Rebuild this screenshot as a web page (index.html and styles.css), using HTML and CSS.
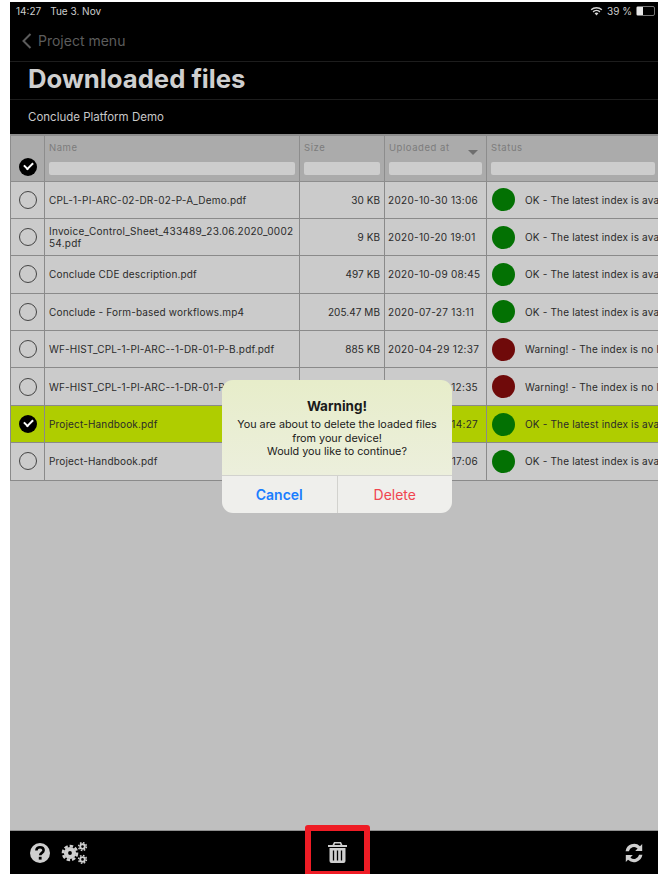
FILE: index.html
```html
<!DOCTYPE html>
<html lang="en">
<head>
  <meta charset="UTF-8">
  <title>Downloaded files</title>
  <link rel="stylesheet" href="styles.css">
</head>
<body>
<div class="screen">
  <div class="statusbar">
    <span class="time">14:27</span>
    <span class="date">Tue 3. Nov</span>
    <span class="status-right">
      <svg class="wifi" viewBox="0 0 16 12"><path d="M8 11.5 5.6 8.9a3.4 3.4 0 0 1 4.8 0zM4.4 7.7 3.2 6.4a6.9 6.9 0 0 1 9.6 0l-1.2 1.3a5.2 5.2 0 0 0-7.2 0zM2 5.2.8 3.9a10.4 10.4 0 0 1 14.4 0L14 5.2a8.7 8.7 0 0 0-12 0z"/></svg>
      <span class="battery-text">39 %</span>
      <span class="battery"><span class="battery-fill"></span></span>
    </span>
  </div>
  <div class="navbar">
    <svg class="back" viewBox="0 0 12 18"><path d="M10 2 3 9l7 7"/></svg>
    <span>Project menu</span>
  </div>
  <h1 class="title">Downloaded files</h1>
  <div class="subtitle">Conclude Platform Demo</div>

  <div class="content">
    <table class="files">
      <thead>
        <tr>
          <th class="col-check"><span class="tick"></span></th>
          <th class="col-name"><div class="th-label">Name</div><div class="filter"></div></th>
          <th class="col-size"><div class="th-label">Size</div><div class="filter"></div></th>
          <th class="col-date"><div class="th-label">Uploaded at<span class="sort"></span></div><div class="filter"></div></th>
          <th class="col-status"><div class="th-label">Status</div><div class="filter"></div></th>
        </tr>
      </thead>
      <tbody>
        <tr>
          <td class="col-check"><span class="radio"></span></td>
          <td>CPL-1-PI-ARC-02-DR-02-P-A_Demo.pdf</td>
          <td class="size">30 KB</td>
          <td class="when">2020-10-30 13:06</td>
          <td><div class="status"><span class="dot ok"></span><span>OK - The latest index is available</span></div></td>
        </tr>
        <tr>
          <td class="col-check"><span class="radio"></span></td>
          <td class="wrap">Invoice_Control_Sheet_433489_23.06.2020_0002<br>54.pdf</td>
          <td class="size">9 KB</td>
          <td class="when">2020-10-20 19:01</td>
          <td><div class="status"><span class="dot ok"></span><span>OK - The latest index is available</span></div></td>
        </tr>
        <tr>
          <td class="col-check"><span class="radio"></span></td>
          <td>Conclude CDE description.pdf</td>
          <td class="size">497 KB</td>
          <td class="when">2020-10-09 08:45</td>
          <td><div class="status"><span class="dot ok"></span><span>OK - The latest index is available</span></div></td>
        </tr>
        <tr>
          <td class="col-check"><span class="radio"></span></td>
          <td>Conclude - Form-based workflows.mp4</td>
          <td class="size">205.47 MB</td>
          <td class="when">2020-07-27 13:11</td>
          <td><div class="status"><span class="dot ok"></span><span>OK - The latest index is available</span></div></td>
        </tr>
        <tr>
          <td class="col-check"><span class="radio"></span></td>
          <td>WF-HIST_CPL-1-PI-ARC--1-DR-01-P-B.pdf.pdf</td>
          <td class="size">885 KB</td>
          <td class="when">2020-04-29 12:37</td>
          <td><div class="status"><span class="dot warn"></span><span>Warning! - The index is no longer valid</span></div></td>
        </tr>
        <tr>
          <td class="col-check"><span class="radio"></span></td>
          <td class="name-cut">WF-HIST_CPL-1-PI-ARC--1-DR-01-P</td>
          <td class="size"></td>
          <td class="when end">12:35</td>
          <td><div class="status"><span class="dot warn"></span><span>Warning! - The index is no longer valid</span></div></td>
        </tr>
        <tr class="selected">
          <td class="col-check"><span class="tick"></span></td>
          <td>Project-Handbook.pdf</td>
          <td class="size"></td>
          <td class="when end">14:27</td>
          <td><div class="status"><span class="dot ok"></span><span>OK - The latest index is available</span></div></td>
        </tr>
        <tr>
          <td class="col-check"><span class="radio"></span></td>
          <td>Project-Handbook.pdf</td>
          <td class="size"></td>
          <td class="when end">17:06</td>
          <td><div class="status"><span class="dot ok"></span><span>OK - The latest index is available</span></div></td>
        </tr>
      </tbody>
    </table>
  </div>

  <div class="toolbar">
    <div class="toolbar-left">
      <svg class="icon" width="22" height="22" viewBox="0 0 22 22">
        <circle cx="11" cy="11" r="10" fill="#cfcfcf"/>
        <path d="M7.4 8.6c0-2.2 1.6-3.4 3.6-3.4s3.6 1.2 3.6 3.1c0 2.6-3.4 2.600-3.400 5" fill="none" stroke="#000" stroke-width="2.600"/>
        <rect x="9.800" y="14.800" width="2.800" height="2.800" fill="#000"/>
      </svg>
      <svg class="icon" width="27" height="22" viewBox="0 0 27 22">
        <g fill="none" stroke="#cfcfcf">
          <circle cx="9" cy="11" r="4" stroke-width="4.200"/>
          <circle cx="9" cy="11" r="7" stroke-width="2.600" stroke-dasharray="3.500 1.900"/>
          <circle cx="21.500" cy="4.600" r="2.300" stroke-width="1.900"/>
          <circle cx="21.500" cy="4.600" r="3.900" stroke-width="1.500" stroke-dasharray="1.600 1.460"/>
          <circle cx="21.500" cy="17.400" r="2.300" stroke-width="1.900"/>
          <circle cx="21.500" cy="17.400" r="3.900" stroke-width="1.500" stroke-dasharray="1.600 1.460"/>
        </g>
      </svg>
    </div>
    <svg class="icon trash" width="19" height="21" viewBox="0 0 19 21">
      <path fill="#cfcfcf" d="M6 0h7l1.500 3H19v2H0V3h4.500zM7 1.500 6.400 3h6.200L12 1.500zM1.500 6h16v13a2 2 0 0 1-2 2h-12a2 2 0 0 1-2-2z"/>
      <path stroke="#000" stroke-width="1.300" d="M5.500 8.500v10M9.500 8.500v10M13.500 8.500v10"/>
    </svg>
    <svg class="icon" width="22" height="22" viewBox="0 0 22 22">
      <g fill="#cfcfcf">
        <path d="M2.600 9.200A8.600 8.600 0 0 1 17 4.200L19.200 2v7h-7l2.400-2.400a5.200 5.200 0 0 0-8.700 2.600z"/>
        <path d="M19.400 12.800A8.600 8.600 0 0 1 5 17.800L2.800 20v-7h7l-2.400 2.400a5.200 5.200 0 0 0 8.700-2.600z"/>
      </g>
    </svg>
  </div>

  <div class="dialog">
    <div class="dialog-body">
      <div class="dialog-title">Warning!</div>
      <div class="dialog-text">You are about to delete the loaded files<br>from your device!<br>Would you like to continue?</div>
    </div>
    <div class="dialog-actions">
      <div class="dialog-btn cancel">Cancel</div>
      <div class="dialog-btn delete">Delete</div>
    </div>
  </div>

  <div class="callout"></div>
</div>
</body>
</html>
```

FILE: styles.css
```css
html, body { margin: 0; padding: 0; background: #fff; }
body { font-family: Inter, 'Liberation Sans', Arial, sans-serif; }
.screen {
  position: relative;
  width: 648px;
  height: 872px;
  margin: 2px 0 0 10px;
  background: #000;
  display: flex;
  flex-direction: column;
  overflow: hidden;
}

.statusbar {
  height: 18px;
  display: flex;
  align-items: center;
  padding: 0 3px 0 6px;
  color: #cdcdcd;
  font-size: 10px;
}
.date { margin-left: 9px; }
.status-right {
  margin-left: auto;
  display: flex;
  align-items: center;
  gap: 4px;
}
.wifi { width: 13px; height: 10px; fill: #d6d6d6; }
.battery {
  width: 17px;
  height: 8px;
  border: 1px solid #777;
  border-radius: 2px;
  display: block;
}
.battery-fill { display: block; width: 6px; height: 8px; background: #e8e8e8; }

.navbar {
  height: 42px;
  display: flex;
  align-items: center;
  gap: 5px;
  padding-left: 10px;
  color: #5c5c5c;
  font-size: 14px;
  border-bottom: 1px solid #1d1d1d;
  box-sizing: border-box;
}
.back { width: 13px; height: 18px; fill: none; stroke: #5c5c5c; stroke-width: 2; }

.title {
  margin: 0;
  height: 37px;
  line-height: 34px;
  padding-left: 18px;
  color: #cfcfcf;
  font-size: 25.700px;
  font-weight: 700;
  border-bottom: 1px solid #1d1d1d;
}
.subtitle {
  height: 34px;
  line-height: 35px;
  padding-left: 18px;
  color: #c8c8c8;
  font-size: 11.500px;
}

.content {
  flex: 1;
  background: #bfbfbf;
  overflow: hidden;
}
.files {
  table-layout: fixed;
  border-collapse: collapse;
  width: 650px;
  color: #2a2a2a;
  font-size: 10px;
  letter-spacing: 0.17px;
}
.files th {
  height: 46px;
  background: #ababab;
  border: 1px solid #8d8d8d;
  border-top: 2px solid #8d8d8d;
  padding: 0 4px;
  text-align: left;
  font-weight: 400;
  vertical-align: top;
  box-sizing: border-box;
}
.files td {
  height: 37.400px;
  background: #cbcbcb;
  border: 1px solid #8a8a8a;
  padding: 0 4px;
  white-space: nowrap;
  overflow: hidden;
  box-sizing: border-box;
}
.files .selected td { background: #afcd00; }
.col-check { width: 34px; }
.col-name { width: 255px; }
.col-size { width: 85px; }
.col-date { width: 102px; }
.files .col-check { padding: 0; text-align: center; vertical-align: middle; }
.files th.col-check { vertical-align: bottom; padding-bottom: 5px; }
.th-label {
  position: relative;
  height: 26px;
  line-height: 24px;
  color: #7c7c7c;
  font-size: 9.500px;
  letter-spacing: 0.55px;
}
.sort {
  position: absolute;
  right: 4px;
  top: 14px;
  border: 5px solid transparent;
  border-top: 5px solid #6e6e6e;
  border-bottom: 0;
}
.filter { height: 13px; background: #cdcdcd; border-radius: 2px; }
.files td.wrap { white-space: normal; line-height: 12px; letter-spacing: 0.25px; }
.size { text-align: right; }
.files td.size { letter-spacing: 0.05px; }
.files td.when { padding: 0 3px; letter-spacing: 0.3px; }
.files td.end { text-align: right; padding-right: 8px; }

.tick, .radio {
  display: inline-block;
  width: 18px;
  height: 18px;
  border-radius: 50%;
  box-sizing: border-box;
  vertical-align: middle;
}
.radio { border: 1px solid #444; }
.tick { background: #000; position: relative; }
.tick::after {
  content: "";
  position: absolute;
  left: 5px;
  top: 4px;
  width: 7px;
  height: 4px;
  border-left: 2px solid #fff;
  border-bottom: 2px solid #fff;
  transform: rotate(-45deg);
}

.status { display: flex; align-items: center; gap: 10px; margin-left: 1px; }
.dot { width: 23px; height: 23px; border-radius: 50%; flex: none; }
.dot.ok { background: #037103; }
.dot.warn { background: #6f0a0a; }

.toolbar {
  height: 44px;
  flex: none;
  border-top: 1px solid #8f8f8f;
  box-sizing: border-box;
  display: grid;
  grid-template-columns: 1fr auto 1fr;
  align-items: center;
  padding: 0 13px 0 19px;
}
.toolbar-left { display: flex; align-items: center; gap: 10px; }
.icon { display: block; }
.toolbar > .icon:last-child { justify-self: end; }

.dialog {
  position: absolute;
  left: 212px;
  top: 378px;
  width: 230px;
  height: 133px;
  border-radius: 11px;
  overflow: hidden;
  display: flex;
  flex-direction: column;
  color: #1a1a1a;
}
.dialog-body {
  height: 95px;
  box-sizing: border-box;
  padding-top: 18px;
  background: linear-gradient(#e7edca, #ecefdc);
  text-align: center;
}
.dialog-title { font-size: 13.500px; font-weight: 700; line-height: 16px; }
.dialog-text { font-size: 10.800px; line-height: 13.500px; margin-top: 4px; }
.dialog-actions {
  flex: 1;
  display: flex;
  background: #efefec;
  border-top: 1px solid #d2d2ce;
}
.dialog-btn {
  flex: 1;
  display: flex;
  align-items: center;
  justify-content: center;
  font-size: 14px;
}
.dialog-btn.cancel { color: #1a7dff; font-weight: 600; border-right: 1px solid #d2d2ce; }
.dialog-btn.delete { color: #f0454f; }

.callout {
  position: absolute;
  left: 295px;
  top: 823px;
  width: 65px;
  height: 52px;
  border: 6px solid #ee1c25;
  border-radius: 3px;
  box-sizing: border-box;
}
```
